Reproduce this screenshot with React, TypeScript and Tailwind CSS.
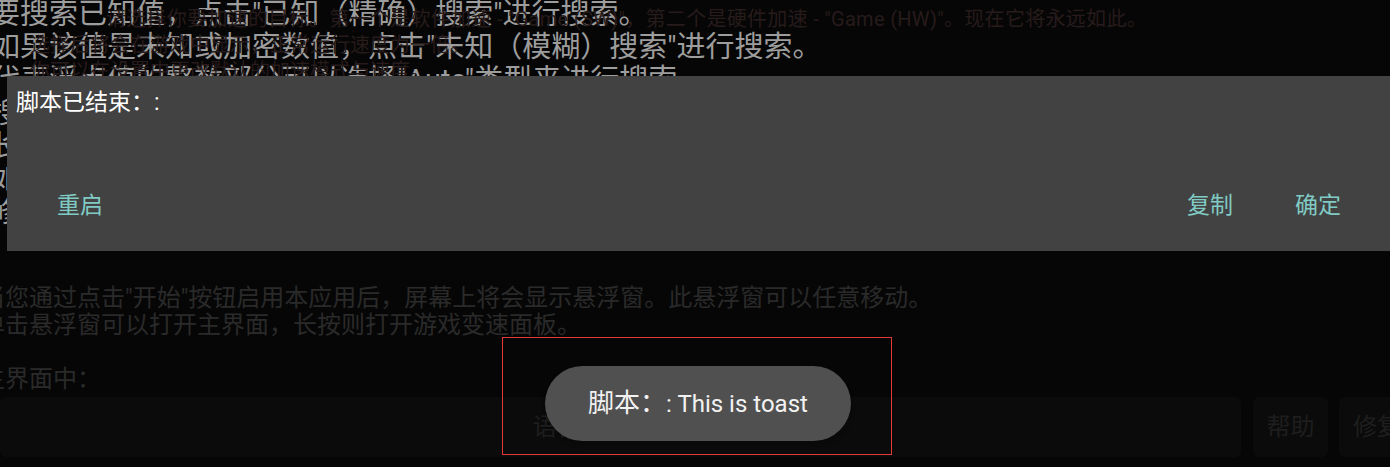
import React from "react";

const font = { fontFamily: "Roboto, 'Noto Sans CJK SC', sans-serif" };

const topLines = [
  "要搜索已知值，点击\"已知（精确）搜索\"进行搜索。",
  "如果该值是未知或加密数值，点击\"未知（模糊）搜索\"进行搜索。",
  "代表浮点值的整数部分可以选择\"Auto\"类型来进行搜索。",
  "搜索完成后，可以在结果列表中修改数值。",
  "长按结果可以打开更多选项。",
  "如需再次搜索，请点击\"重置\"按钮。",
  "修改完成后返回游戏即可。",
];

const ghostLines = [
  "请选择你要加速的目标。第一个是软件加速 - \"Game (SW)\"，第二个是硬件加速 - \"Game (HW)\"。现在它将永远如此。",
  "选择后将会在游戏中显示，正常运行速度为一倍。",
  "你可以在设置中更改默认的加速模式与速度。",
];

export default function App() {
  return (
    <div className="relative w-[1390px] h-[467px] overflow-hidden bg-[#060606]" style={font}>
      {/* log text at the top */}
      <div className="relative h-[285px] overflow-hidden">
        <div className="-ml-[9px] -mt-[2px] text-[29px] leading-[33px] text-[#9d9d9d] whitespace-nowrap">
          {topLines.map((l) => (
            <div key={l}>{l}</div>
          ))}
        </div>
        <div className="absolute left-0 top-[6px] w-[1147px] text-right text-[20px] leading-[26px] text-[#271b1b] whitespace-nowrap">
          {ghostLines.map((l, i) => (
            <div key={l} className={i === 0 ? "tracking-[0.3px]" : "text-left pl-[30px]"}>{l}</div>
          ))}
        </div>
      </div>

      {/* help text of the app */}
      <div className="-ml-[19px] text-[24px] leading-[27px] text-[#2a2a2a] whitespace-nowrap">
        <div>当您通过点击"开始"按钮启用本应用后，屏幕上将会显示悬浮窗。此悬浮窗可以任意移动。</div>
        <div>单击悬浮窗可以打开主界面，长按则打开游戏变速面板。</div>
        <div>&nbsp;</div>
        <div>主界面中：</div>
      </div>

      {/* bottom bar */}
      <div className="mt-[4px] flex h-[60px] text-[24px] text-[#1e1e1e]">
        <div className="flex w-[1241px] shrink-0 items-center justify-center rounded-md bg-[#0b0b0b]">语言 (Language)</div>
        <div className="ml-[12px] flex w-[75px] shrink-0 items-center justify-center rounded-md bg-[#0b0b0b]">帮助</div>
        <div className="ml-[11px] flex w-[80px] shrink-0 items-center justify-start rounded-md bg-[#0b0b0b] pl-[14px]">修复</div>
      </div>

      {/* dialog */}
      <div className="absolute left-[7px] top-[76px] right-0 h-[175px] flex flex-col bg-[#424242]">
        <div className="pt-[12px] pl-[9px] text-[23px] leading-[30px] text-white">脚本已结束：:</div>
        <div className="mt-auto mb-[30px] flex items-center text-[23px] leading-[30px] text-[#80cbc4]">
          <span className="ml-[50px]">重启</span>
          <span className="ml-auto">复制</span>
          <span className="ml-[62px] mr-[49px]">确定</span>
        </div>
      </div>

      {/* toast */}
      <div className="absolute left-[502px] top-[337px] w-[390px] h-[118px] border border-[#e53935]">
        <div className="ml-[42px] mt-[28px] flex h-[75px] w-[306px] items-center justify-center rounded-full bg-[#505050] text-[24px] text-[#f2f2f2] shadow-md">
          <span className="text-[26px]">脚本：</span>
          <span>: This is toast</span>
        </div>
      </div>
    </div>
  );
}
